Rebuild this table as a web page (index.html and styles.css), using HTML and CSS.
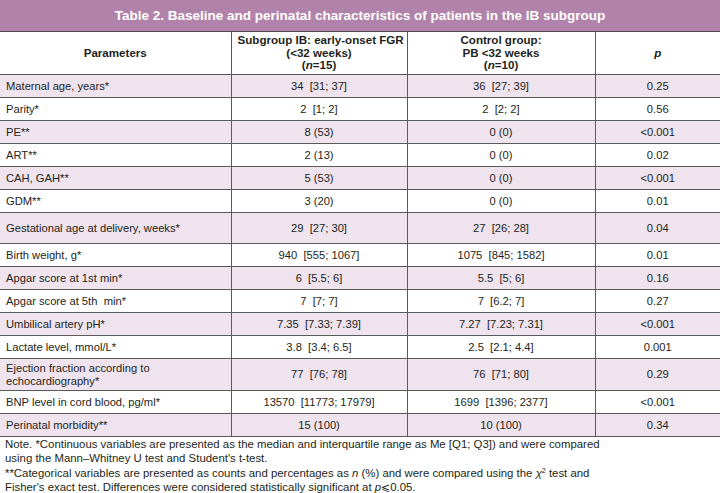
FILE: index.html
```html
<!DOCTYPE html>
<html>
<head>
<meta charset="utf-8">
<link rel="stylesheet" href="styles.css">
</head>
<body>
<div class="page">
  <div class="title">Table 2. Baseline and perinatal characteristics of patients in the IB subgroup</div>
  <table class="data">
    <colgroup>
      <col class="c1"><col class="c2"><col class="c3"><col class="c4">
    </colgroup>
    <thead>
      <tr class="head">
        <th>Parameters</th>
        <th>Subgroup IB: early-onset FGR<br>(&lt;32 weeks)<br>(<i>n</i>=15)</th>
        <th>Control group:<br>PB &lt;32 weeks<br>(<i>n</i>=10)</th>
        <th><i>p</i></th>
      </tr>
    </thead>
    <tbody>
      <tr class="pink"><td>Maternal age, years*</td><td>34&nbsp; [31; 37]</td><td>36&nbsp; [27; 39]</td><td>0.25</td></tr>
      <tr><td>Parity*</td><td>2&nbsp; [1; 2]</td><td>2&nbsp; [2; 2]</td><td>0.56</td></tr>
      <tr class="pink"><td>PE**</td><td>8 (53)</td><td>0 (0)</td><td>&lt;0.001</td></tr>
      <tr><td>ART**</td><td>2 (13)</td><td>0 (0)</td><td>0.02</td></tr>
      <tr class="pink"><td>CAH, GAH**</td><td>5 (53)</td><td>0 (0)</td><td>&lt;0.001</td></tr>
      <tr><td>GDM**</td><td>3 (20)</td><td>0 (0)</td><td>0.01</td></tr>
      <tr class="pink tall"><td>Gestational age at delivery, weeks*</td><td>29&nbsp; [27; 30]</td><td>27&nbsp; [26; 28]</td><td>0.04</td></tr>
      <tr><td>Birth weight, g*</td><td>940&nbsp; [555; 1067]</td><td>1075&nbsp; [845; 1582]</td><td>0.01</td></tr>
      <tr class="pink"><td>Apgar score at 1st min*</td><td>6&nbsp; [5.5; 6]</td><td>5.5&nbsp; [5; 6]</td><td>0.16</td></tr>
      <tr><td>Apgar score at 5th&nbsp; min*</td><td>7&nbsp; [7; 7]</td><td>7&nbsp; [6.2; 7]</td><td>0.27</td></tr>
      <tr class="pink"><td>Umbilical artery pH*</td><td>7.35&nbsp; [7.33; 7.39]</td><td>7.27&nbsp; [7.23; 7.31]</td><td>&lt;0.001</td></tr>
      <tr><td>Lactate level, mmol/L*</td><td>3.8&nbsp; [3.4; 6.5]</td><td>2.5&nbsp; [2.1; 4.4]</td><td>0.001</td></tr>
      <tr class="pink two"><td>Ejection fraction according to<br>echocardiography*</td><td>77&nbsp; [76; 78]</td><td>76&nbsp; [71; 80]</td><td>0.29</td></tr>
      <tr><td>BNP level in cord blood, pg/ml*</td><td>13570&nbsp; [11773; 17979]</td><td>1699&nbsp; [1396; 2377]</td><td>&lt;0.001</td></tr>
      <tr class="pink"><td>Perinatal morbidity**</td><td>15 (100)</td><td>10 (100)</td><td>0.34</td></tr>
    </tbody>
  </table>
  <div class="note">
    <p>Note. *Continuous variables are presented as the median and interquartile range as Me [Q1; Q3]) and were compared<br>using the Mann–Whitney U test and Student's t-test.</p>
    <p>**Categorical variables are presented as counts and percentages as <i>n</i> (%) and were compared using the <i>χ</i><sup>2</sup> test and<br>Fisher's exact test. Differences were considered statistically significant at <i>p</i>⩽0.05.</p>
  </div>
</div>
</body>
</html>
```

FILE: styles.css
```css
html, body {
  margin: 0;
  padding: 0;
  background: #ffffff;
}
body {
  font-family: "Liberation Sans", Arial, sans-serif;
  color: #231f20;
  width: 720px;
  height: 493px;
  overflow: hidden;
}
.page {
  width: 720px;
}
.title {
  background: #b283aa;
  color: #ffffff;
  font-weight: bold;
  font-size: 13.5px;
  height: 31px;
  line-height: 31px;
  text-align: center;
  border-bottom: 1px solid #4a4a4a;
}
.data {
  width: 720px;
  border-collapse: collapse;
  table-layout: fixed;
  font-size: 11.2px;
}
.c1 { width: 231px; }
.c2 { width: 176px; }
.c3 { width: 188px; }
.c4 { width: 125px; }
.data th, .data td {
  border: 1px solid #5a5a5a;
  padding: 0 6px;
  text-align: center;
  vertical-align: middle;
  white-space: nowrap;
}
.data tr > :first-child {
  border-left: none;
  text-align: left;
}
.data tr > :last-child {
  border-right: none;
}
.data thead th {
  border-top: none;
}
.data th {
  font-weight: bold;
  font-size: 11.6px;
  line-height: 12.8px;
  height: 42px;
  padding-top: 0;
}
.data tr.head > :first-child {
  text-align: center;
}
.data td {
  height: 22px;
  line-height: 13px;
}
.data tr.tall td {
  height: 30px;
}
.data tr.two td {
  height: 31px;
}
.data tr.pink td {
  background: #efe3ee;
}
.note {
  font-size: 11.4px;
  line-height: 14.4px;
  padding: 0 6px 0 5px;
}
.note p {
  margin: 0;
}
.note sup {
  font-size: 7px;
  line-height: 0;
  vertical-align: 4px;
}
```
